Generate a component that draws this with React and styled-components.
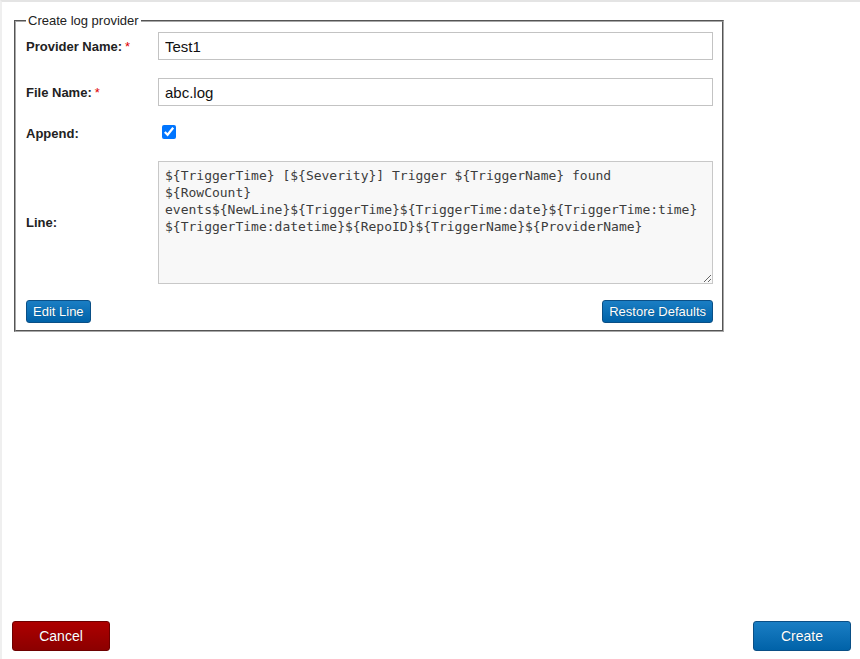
import React, { useState } from 'react';
import styled, { createGlobalStyle } from 'styled-components';

const GlobalStyle = createGlobalStyle`
  html, body {
    margin: 0;
    padding: 0;
    background: #fff;
  }
  body {
    font-family: "Liberation Sans", Arial, sans-serif;
  }
`;

const Page = styled.div`
  box-sizing: border-box;
  height: 659px;
  display: flex;
  flex-direction: column;
  justify-content: space-between;
  border-top: 2px solid #e4e4e4;
  border-left: 2px solid #efefef;
  padding: 11px 9px 8px 10px;
`;

const Fieldset = styled.fieldset`
  box-sizing: border-box;
  width: 710px;
  margin: 0 0 0 2px;
  padding: 4px 9px 7px 10px;
  border: 2px groove #a8a8a8;
  min-width: 0;
`;

const Legend = styled.legend`
  padding: 0 2px;
  font-size: 13px;
  line-height: 15px;
  color: #222;
`;

const FormGrid = styled.div`
  display: grid;
  grid-template-columns: 132px 1fr;
  grid-template-rows: 28px 28px 19px 123px;
  row-gap: 18px;
  align-items: center;
`;

const Label = styled.label`
  font-size: 13px;
  font-weight: bold;
  color: #222;
`;

const Required = styled.span`
  color: #e00000;
  font-weight: normal;
  margin-left: 3px;
`;

const TextInput = styled.input`
  box-sizing: border-box;
  width: 100%;
  height: 28px;
  margin: 0;
  padding: 0 6px;
  border: 1px solid #c3c3c3;
  font-family: "Liberation Sans", Arial, sans-serif;
  font-size: 15px;
  color: #111;
  outline: none;
`;

const Check = styled.input`
  width: 14px;
  height: 14px;
  margin: 0 0 0 4px;
  accent-color: #0075ff;
`;

const LineArea = styled.textarea`
  box-sizing: border-box;
  width: 100%;
  height: 123px;
  margin: 0;
  padding: 5px 6px;
  border: 1px solid #c8c8c8;
  background: #f8f8f8;
  font-family: "DejaVu Sans Mono", monospace;
  font-size: 13px;
  line-height: 17px;
  color: #3c3c3c;
  resize: vertical;
  outline: none;
`;

const ButtonRow = styled.div`
  display: flex;
  justify-content: space-between;
  margin-top: 16px;
`;

const Button = styled.button`
  box-sizing: border-box;
  height: ${p => (p.$large ? '30px' : '23px')};
  min-width: ${p => (p.$large ? '98px' : '0')};
  padding: 0 ${p => (p.$large ? '12px' : '6px')};
  border-radius: 3px;
  border: 1px solid ${p => (p.$danger ? '#6e0000' : '#0a4f86')};
  background: ${p =>
    p.$danger
      ? 'linear-gradient(#ad0000, #8c0000)'
      : 'linear-gradient(#1a7ec4, #0062a8)'};
  color: #fff;
  font-family: "Liberation Sans", Arial, sans-serif;
  font-size: ${p => (p.$large ? '14px' : '13px')};
  text-shadow: 0 0 1px rgba(0, 0, 0, 0.35);
  cursor: pointer;
`;

const Footer = styled.div`
  display: flex;
  justify-content: space-between;
  align-items: flex-end;
`;

const DEFAULT_LINE =
  '${TriggerTime} [${Severity}] Trigger ${TriggerName} found\n' +
  '${RowCount}\n' +
  'events${NewLine}${TriggerTime}${TriggerTime:date}${TriggerTime:time}\n' +
  '${TriggerTime:datetime}${RepoID}${TriggerName}${ProviderName}';

export default function App() {
  const [name, setName] = useState('Test1');
  const [file, setFile] = useState('abc.log');
  const [append, setAppend] = useState(true);
  const [line, setLine] = useState(DEFAULT_LINE);

  return (
    <>
      <GlobalStyle />
      <Page>
        <Fieldset>
          <Legend>Create log provider</Legend>
          <FormGrid>
            <Label>
              Provider Name:<Required>*</Required>
            </Label>
            <TextInput value={name} onChange={e => setName(e.target.value)} />

            <Label>
              File Name:<Required>*</Required>
            </Label>
            <TextInput value={file} onChange={e => setFile(e.target.value)} />

            <Label>Append:</Label>
            <div>
              <Check
                type="checkbox"
                checked={append}
                onChange={e => setAppend(e.target.checked)}
              />
            </div>

            <Label>Line:</Label>
            <LineArea value={line} onChange={e => setLine(e.target.value)} />
          </FormGrid>
          <ButtonRow>
            <Button>Edit Line</Button>
            <Button onClick={() => setLine(DEFAULT_LINE)}>Restore Defaults</Button>
          </ButtonRow>
        </Fieldset>

        <Footer>
          <Button $large $danger>Cancel</Button>
          <Button $large>Create</Button>
        </Footer>
      </Page>
    </>
  );
}
